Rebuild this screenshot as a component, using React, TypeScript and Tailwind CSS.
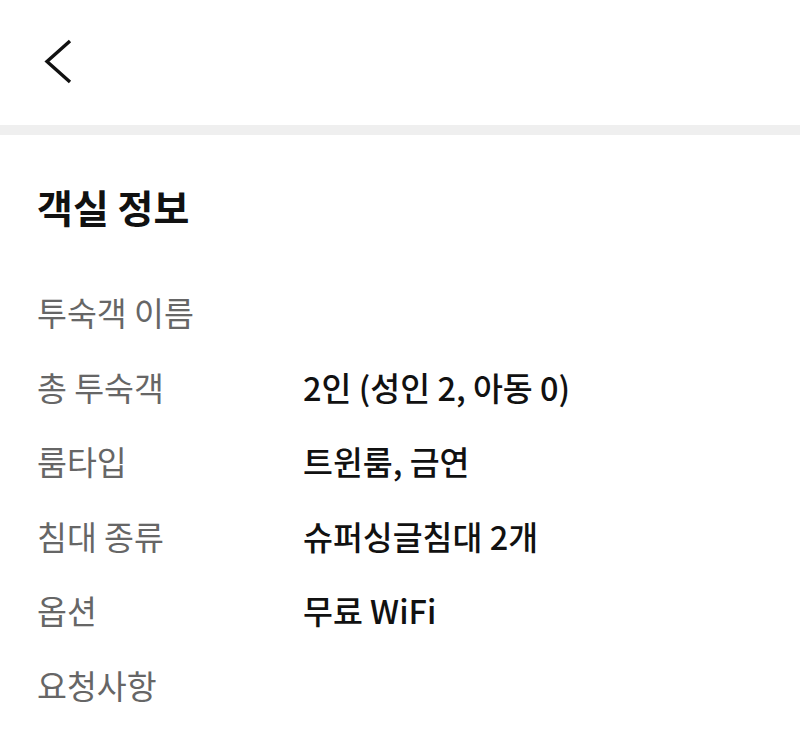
import * as React from 'react';

const rows: { label: string; value?: string }[] = [
  { label: '투숙객 이름' },
  { label: '총 투숙객', value: '2인 (성인 2, 아동 0)' },
  { label: '룸타입', value: '트윈룸, 금연' },
  { label: '침대 종류', value: '슈퍼싱글침대 2개' },
  { label: '옵션', value: '무료 WiFi' },
  { label: '요청사항' },
];

function BackIcon() {
  return (
    <svg width="30" height="46" viewBox="0 0 30 46" fill="none">
      <path d="M26 2 L3 22.5 L26 43" stroke="#111" strokeWidth="3.4" strokeLinecap="butt" strokeLinejoin="miter" />
    </svg>
  );
}

export default function App() {
  return (
    <div className="w-[800px] h-[730px] bg-white overflow-hidden [font-family:'Noto_Sans_CJK_KR','Noto_Sans',sans-serif]">
      {/* Top bar */}
      <div className="h-[125px] flex items-center pl-[44px] pb-[2px]">
        <BackIcon />
      </div>
      <div className="h-[10px] bg-[#efefef]" />

      {/* Room info */}
      <section className="px-[37px] pt-[49px]">
        <h1 className="text-[39px] leading-[44px] font-bold text-[#111]">객실 정보</h1>
        <dl className="mt-[47px] flex flex-col">
          {rows.map((row) => (
            <div key={row.label} className="h-[74.6px] flex items-center">
              <dt className="w-[266px] text-[32.5px] text-[#666]">{row.label}</dt>
              {row.value && (
                <dd className="text-[32.5px] font-medium text-[#111]">{row.value}</dd>
              )}
            </div>
          ))}
        </dl>
      </section>
    </div>
  );
}
